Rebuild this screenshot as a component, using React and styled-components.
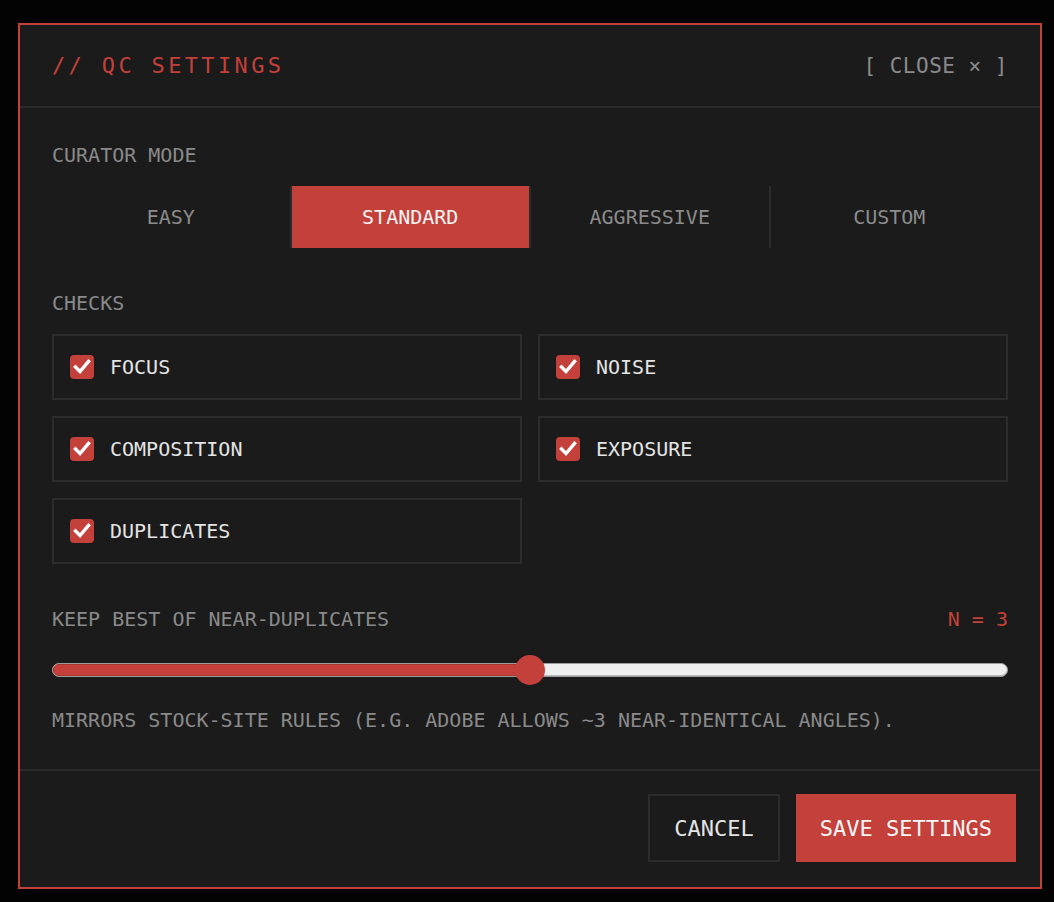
import React, { useState } from 'react'
import styled, { createGlobalStyle } from 'styled-components'

const RED = '#c4403a'
const MONO = '"DejaVu Sans Mono", "Liberation Mono", monospace'

const GlobalStyle = createGlobalStyle`
  html, body {
    margin: 0;
    padding: 0;
    background: #030303;
  }
  body {
    font-family: ${MONO};
  }
`

const MODES = ['EASY', 'STANDARD', 'AGGRESSIVE', 'CUSTOM']
const CHECKS = ['FOCUS', 'NOISE', 'COMPOSITION', 'EXPOSURE', 'DUPLICATES']

function Check() {
  return (
    <CheckBox>
      <svg width="24" height="24" viewBox="0 0 24 24">
        <polyline points="5.5,12 10,16.5 18.5,6.5" fill="none" stroke="#fff" strokeWidth="3.4" strokeLinecap="square" strokeLinejoin="miter" />
      </svg>
    </CheckBox>
  )
}

function Slider({ min, max, value }) {
  const pct = (value - min) / (max - min)
  const pos = `calc(15px + (100% - 30px) * ${pct})`
  return (
    <SliderWrap>
      <TrackBase>
        <TrackFill style={{ width: pos }} />
      </TrackBase>
      <Thumb style={{ left: pos }} />
    </SliderWrap>
  )
}

export default function App() {
  const [mode, setMode] = useState('STANDARD')
  return (
    <>
      <GlobalStyle />
      <Backdrop>
        <Modal>
          <Header>
            <Title>// QC SETTINGS</Title>
            <CloseButton>[ CLOSE × ]</CloseButton>
          </Header>

          <Body>
            <Label>CURATOR MODE</Label>
            <Tabs>
              {MODES.map(m => (
                <Tab key={m} $active={m === mode} onClick={() => setMode(m)}>{m}</Tab>
              ))}
            </Tabs>

            <Label $top>CHECKS</Label>
            <CheckGrid>
              {CHECKS.map(c => (
                <CheckCard key={c}>
                  <Check />
                  <CheckText>{c}</CheckText>
                </CheckCard>
              ))}
            </CheckGrid>

            <SliderHead>
              <Label $inline>KEEP BEST OF NEAR-DUPLICATES</Label>
              <Value>N = 3</Value>
            </SliderHead>
            <Slider min={1} max={5} value={3} />
            <Hint>MIRRORS STOCK-SITE RULES (E.G. ADOBE ALLOWS ~3 NEAR-IDENTICAL ANGLES).</Hint>
          </Body>

          <Footer>
            <GhostButton>CANCEL</GhostButton>
            <PrimaryButton>SAVE SETTINGS</PrimaryButton>
          </Footer>
        </Modal>
      </Backdrop>
    </>
  )
}

const Backdrop = styled.div`
  padding: 23px 0 0 18px;
`

const Modal = styled.div`
  width: 1024px;
  box-sizing: border-box;
  border: 2px solid ${RED};
  background: #1b1b1b;
  display: flex;
  flex-direction: column;
`

const Header = styled.div`
  height: 81px;
  border-bottom: 2px solid #2a2a2a;
  padding: 0 32px;
  display: flex;
  align-items: center;
  justify-content: space-between;
`

const Title = styled.h2`
  margin: 0;
  font-size: 22px;
  font-weight: normal;
  letter-spacing: 3.35px;
  color: ${RED};
`

const CloseButton = styled.button`
  background: none;
  border: 0;
  padding: 0;
  font-family: ${MONO};
  font-size: 21px;
  letter-spacing: 0.5px;
  color: #8a8a8a;
  cursor: pointer;
`

const Body = styled.div`
  padding: 35px 32px 37px;
  display: flex;
  flex-direction: column;
`

const Label = styled.div`
  font-size: 20px;
  line-height: 24px;
  color: #8a8a8a;
  margin-top: ${p => (p.$top ? '43px' : '0')};
  margin-bottom: ${p => (p.$inline ? '0' : '19px')};
`

const Tabs = styled.div`
  display: flex;
  height: 62px;
`

const Tab = styled.button`
  flex: 1;
  border: 0;
  padding: 0;
  font-family: ${MONO};
  font-size: 20px;
  background: ${p => (p.$active ? RED : 'transparent')};
  background-clip: padding-box;
  color: ${p => (p.$active ? '#f4f4f4' : '#8c8c8c')};
  cursor: pointer;

  & + & {
    border-left: 2px solid #2c2c2c;
  }
`

const CheckGrid = styled.div`
  display: grid;
  grid-template-columns: 1fr 1fr;
  gap: 16px;
`

const CheckCard = styled.label`
  height: 66px;
  box-sizing: border-box;
  border: 2px solid #2c2c2c;
  padding: 0 16px;
  display: flex;
  align-items: center;
  gap: 16px;
`

const CheckBox = styled.span`
  width: 24px;
  height: 24px;
  border-radius: 4px;
  background: ${RED};
  display: flex;
`

const CheckText = styled.span`
  font-size: 20px;
  color: #e4e4e4;
`

const SliderHead = styled.div`
  margin-top: 43px;
  display: flex;
  justify-content: space-between;
  align-items: center;
`

const Value = styled.div`
  font-size: 20px;
  line-height: 24px;
  color: ${RED};
`

const SliderWrap = styled.div`
  position: relative;
  height: 30px;
  margin-top: 24px;
  display: flex;
  align-items: center;
`

const TrackBase = styled.div`
  flex: 1;
  height: 14px;
  box-sizing: border-box;
  border-radius: 7px;
  background: #efefef;
  border: 1px solid #9c9c9c;
  box-shadow: inset 0 -1px 0 #b8b8b8;
  overflow: hidden;
  display: flex;
`

const TrackFill = styled.div`
  height: 100%;
  background: ${RED};
  box-shadow: inset 0 0 0 1px #a8362f;
`

const Thumb = styled.div`
  position: absolute;
  top: 0;
  width: 30px;
  height: 30px;
  margin-left: -15px;
  border-radius: 50%;
  background: ${RED};
`

const Hint = styled.div`
  margin-top: 23px;
  font-size: 20px;
  line-height: 24px;
  color: #8a8a8a;
`

const Footer = styled.div`
  border-top: 2px solid #2a2a2a;
  padding: 23px 24px 25px;
  display: flex;
  justify-content: flex-end;
  gap: 16px;
`

const GhostButton = styled.button`
  height: 68px;
  padding: 0 24px;
  border: 2px solid #2c2c2c;
  background: transparent;
  font-family: ${MONO};
  font-size: 22px;
  color: #e4e4e4;
  cursor: pointer;
`

const PrimaryButton = styled.button`
  height: 68px;
  padding: 0 24px;
  border: 0;
  background: ${RED};
  font-family: ${MONO};
  font-size: 22px;
  color: #f6f6f6;
  cursor: pointer;
`
